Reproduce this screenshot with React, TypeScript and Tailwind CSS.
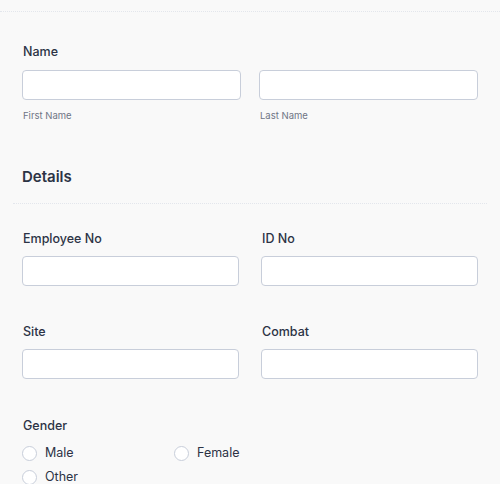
import React from 'react';

const input =
  'block h-[30px] w-full rounded-[4px] border border-[#c8ceda] bg-white outline-none';

function Field({ label }: { label: string }) {
  return (
    <div>
      <label className="block pl-[1px] text-[12.5px] font-[450] leading-[16px] text-[#2c3345]">{label}</label>
      <input type="text" className={`mt-[9px] ${input}`} />
    </div>
  );
}

function Radio({ label }: { label: string }) {
  return (
    <label className="flex h-[15px] items-center gap-[8px] text-[12.5px] text-[#2c3345]">
      <span className="block h-[15px] w-[15px] rounded-full border border-[#c8ceda] bg-white" />
      {label}
    </label>
  );
}

export default function App() {
  return (
    <div
      className="min-h-[484px] w-[500px] overflow-hidden bg-[#f9f9f9]"
      style={{ fontFamily: 'Inter, "Liberation Sans", sans-serif' }}
    >
      <div className="h-[12px] border-b border-dotted border-[#e3e6ec]" />

      <div className="px-[22px] pt-[32px]">
        <div className="pl-[1px] text-[12.5px] font-[450] leading-[16px] text-[#2c3345]">Name</div>
        <div className="mt-[10px] grid grid-cols-2 gap-x-[18px]">
          <div>
            <input type="text" className={input} />
            <div className="mt-[9px] pl-[1px] text-[9.5px] leading-[14px] text-[#6f7585]">First Name</div>
          </div>
          <div>
            <input type="text" className={input} />
            <div className="mt-[9px] pl-[1px] text-[9.5px] leading-[14px] text-[#6f7585]">Last Name</div>
          </div>
        </div>
      </div>

      <div className="mx-[13px] mt-[44px] border-b border-dotted border-[#e3e6ec] px-[9px] pb-[16px]">
        <h2 className="text-[15px] font-semibold leading-[20px] text-[#2c3345]">Details</h2>
      </div>

      <div className="grid grid-cols-2 gap-x-[22px] gap-y-[38px] px-[22px] pt-[27px]">
        <Field label="Employee No" />
        <Field label="ID No" />
        <Field label="Site" />
        <Field label="Combat" />
      </div>

      <div className="px-[22px] pt-[39px]">
        <div className="pl-[1px] text-[12.5px] font-[450] leading-[16px] text-[#2c3345]">Gender</div>
        <div className="mt-[12px] grid w-[304px] grid-cols-2 gap-y-[9px]">
          <Radio label="Male" />
          <Radio label="Female" />
          <Radio label="Other" />
        </div>
      </div>
    </div>
  );
}
